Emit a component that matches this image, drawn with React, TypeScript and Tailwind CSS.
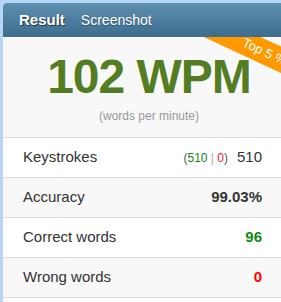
export default function App() {
  const rows = [
    { label: "Keystrokes", alt: false },
    { label: "Accuracy", alt: true },
    { label: "Correct words", alt: false },
    { label: "Wrong words", alt: true },
  ];

  return (
    <div
      className="w-[281px] h-[302px] overflow-hidden bg-[#b7d5f5] pl-[3px] pt-[3px]"
      style={{ fontFamily: '"Liberation Sans", Arial, sans-serif' }}
    >
      <div className="w-[292px] h-[310px] bg-white rounded-tl-[4px] overflow-hidden">
        {/* header */}
        <div className="h-[34px] flex items-center gap-[16px] pl-[16px] bg-gradient-to-b from-[#5e90b0] to-[#3d6c8d] text-white">
          <span className="text-[15px] font-bold [text-shadow:1px_1px_1px_rgba(0,0,0,0.6)]">Result</span>
          <span className="text-[14px] [text-shadow:0_1px_1px_rgba(0,0,0,0.3)]">Screenshot</span>
        </div>

        {/* wpm block */}
        <div className="relative h-[101px] bg-[#f8f8f8] border-b border-[#dddddd] overflow-hidden flex flex-col items-center">
          <div className="mt-[12px] text-[48px] leading-[56px] font-bold text-[#527d23] tracking-[-1px]">102 WPM</div>
          <div className="mt-[2px] text-[12px] leading-[18px] text-[#999999]">(words per minute)</div>
          <div className="absolute left-[187px] top-[1px] w-[140px] h-[24px] bg-[#ff9900] rotate-[25deg] flex items-center justify-center">
            <span className="text-[13px] text-white pl-[10px]">Top 5 %</span>
          </div>
        </div>

        {/* rows */}
        <div className="flex flex-col">
          {rows.map((r) => (
            <div
              key={r.label}
              className={`h-[40px] flex items-center justify-between pl-[20px] pr-[33px] border-b border-[#dddddd] text-[15px] text-[#333333] ${
                r.alt ? "bg-[#f8f8f8]" : "bg-white"
              }`}
            >
              <span>{r.label}</span>
              {r.label === "Keystrokes" && (
                <span className="flex items-baseline">
                  <span className="text-[12px] text-[#555555] mr-[9px]">
                    (<span className="text-[#118811]">510</span>
                    <span className="text-[#aaaaaa]"> | </span>
                    <span className="text-[#ee1111]">0</span>)
                  </span>
                  <span>510</span>
                </span>
              )}
              {r.label === "Accuracy" && <span className="font-bold">99.03%</span>}
              {r.label === "Correct words" && <span className="font-bold text-[#118811]">96</span>}
              {r.label === "Wrong words" && <span className="font-bold text-[#ff0000]">0</span>}
            </div>
          ))}
        </div>
      </div>
    </div>
  );
}
